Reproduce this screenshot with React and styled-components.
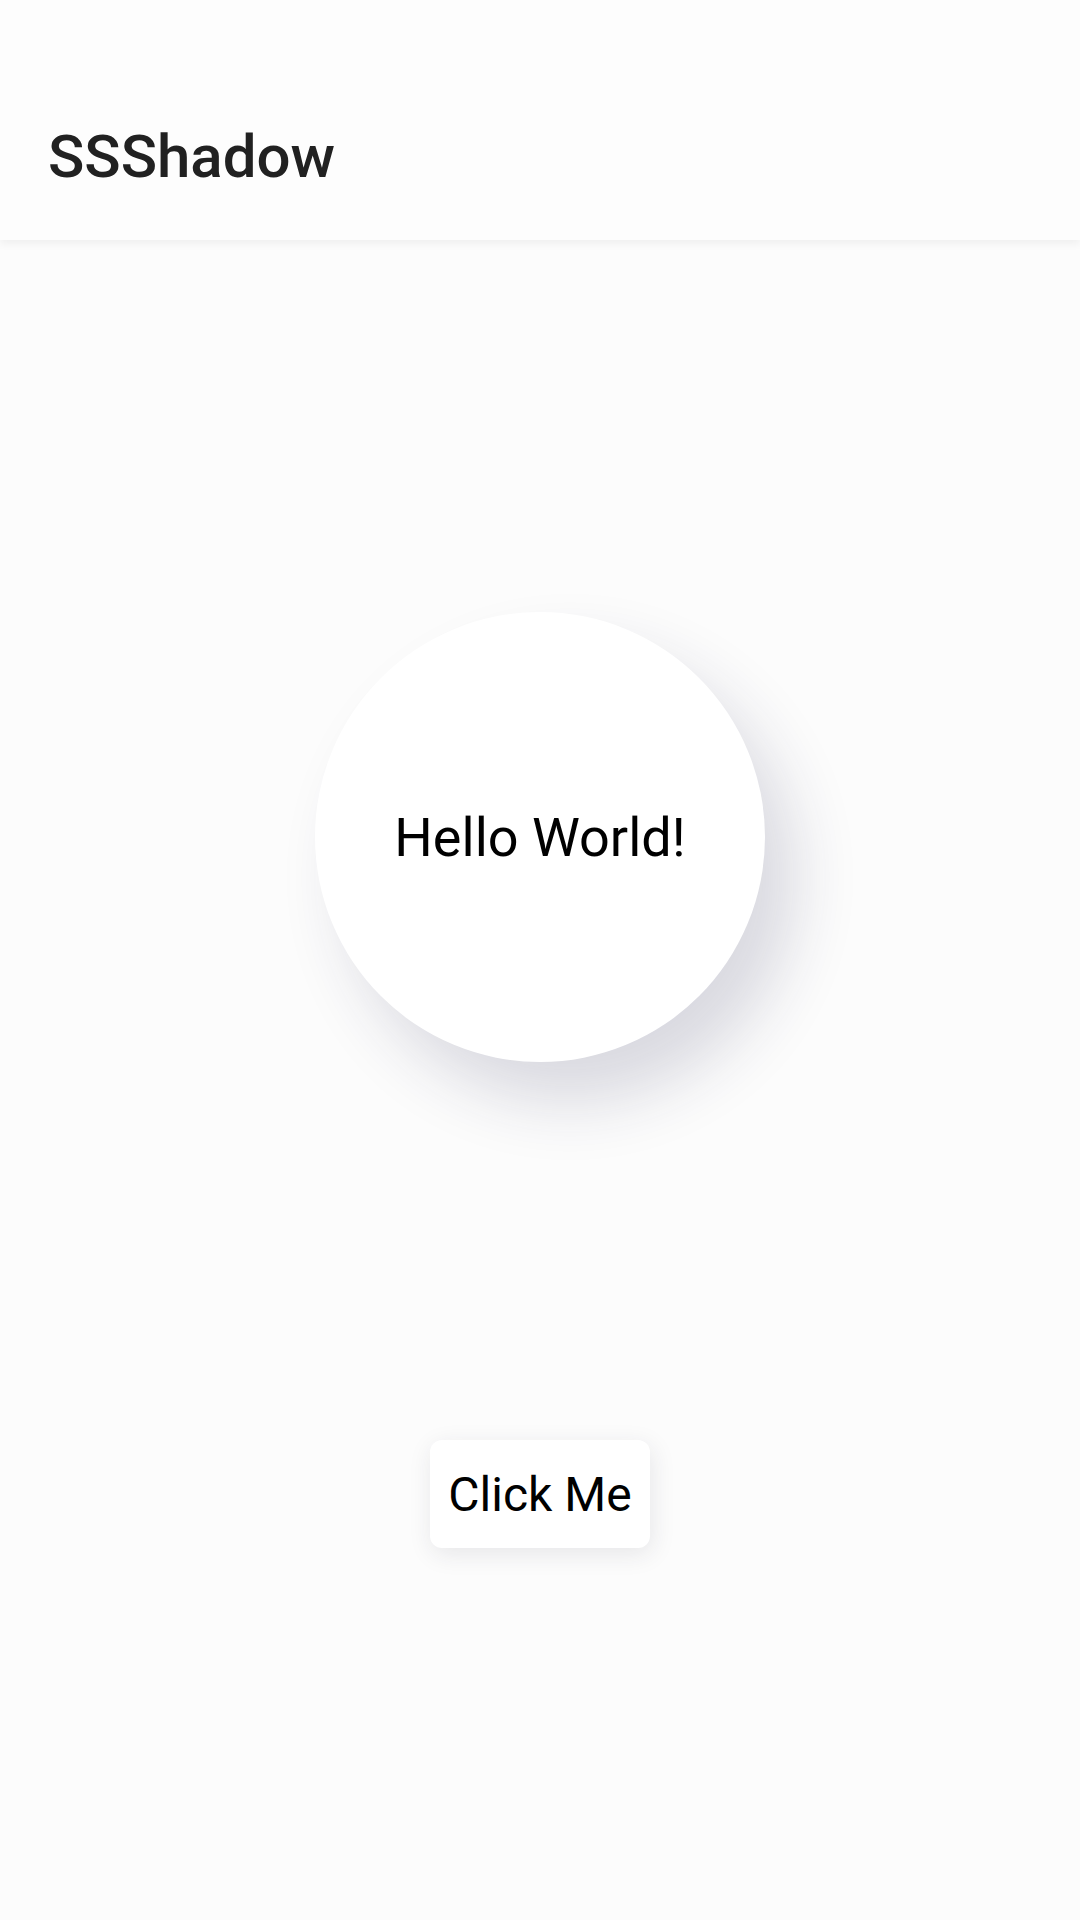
import styled, { createGlobalStyle } from 'styled-components'

const GlobalStyle = createGlobalStyle`
    html, body {
        margin: 0;
        padding: 0;
        background: #fcfcfc;
        font-family: Roboto, "Noto Sans", sans-serif;
    }
`

const App = () => {
    return (
        <Screen>
            <GlobalStyle />
            <AppBar>
                <StatusBar />
                <Toolbar>
                    <Title>SSShadow</Title>
                </Toolbar>
            </AppBar>
            <Content>
                <Circle>Hello World!</Circle>
                <ShadowButton>Click Me</ShadowButton>
            </Content>
        </Screen>
    )
}

export default App

const Screen = styled.div`
    display: flex;
    flex-direction: column;
    width: 1080px;
    min-height: 1920px;
    background: #fcfcfc;
`

const AppBar = styled.header`
    display: flex;
    flex-direction: column;
    background: #fdfdfd;
    box-shadow: 0 4px 8px rgba(0, 0, 0, 0.05);
    position: relative;
    z-index: 1;
`

const StatusBar = styled.div`
    height: 72px;
`

const Toolbar = styled.div`
    height: 168px;
    display: flex;
    align-items: center;
    padding-left: 48px;
`

const Title = styled.h1`
    margin: 0;
    font-family: Roboto, sans-serif;
    font-weight: 500;
    font-size: 60px;
    color: #212121;
`

const Content = styled.main`
    flex: 1;
    display: flex;
    flex-direction: column;
    align-items: center;
    justify-content: center;
    gap: 378px;
`

const Circle = styled.div`
    width: 450px;
    height: 450px;
    border-radius: 50%;
    background: #ffffff;
    display: flex;
    align-items: center;
    justify-content: center;
    font-family: Roboto, sans-serif;
    font-size: 54px;
    color: #000;
    box-shadow: 30px 40px 64px rgba(40, 40, 80, 0.16);
`

const ShadowButton = styled.button`
    width: 220px;
    height: 108px;
    border: none;
    border-radius: 12px;
    background: #ffffff;
    font-family: Roboto, sans-serif;
    font-size: 48px;
    color: #000;
    padding: 0;
    box-shadow: 2px 6px 24px rgba(40, 40, 60, 0.1);
`
